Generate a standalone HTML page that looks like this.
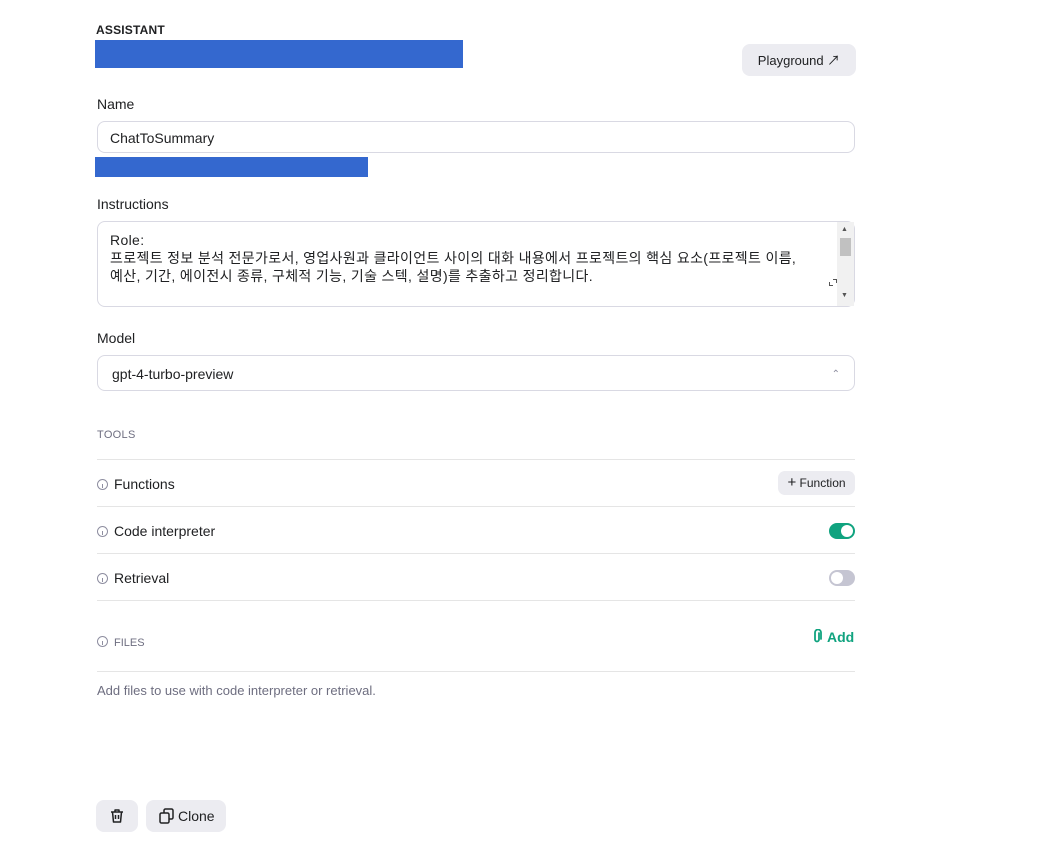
<!DOCTYPE html><html><head><meta charset="utf-8"><style>
*{box-sizing:border-box;margin:0;padding:0}
body{width:1053px;height:844px;background:#fff;font-family:"Liberation Sans","Noto Sans CJK KR",sans-serif;color:#202123;position:relative;overflow:hidden}
.a{position:absolute}
.lbl{font-size:14px;color:#202123}
.inp{border:1px solid #d9d9e3;border-radius:8px;background:#fff}
.hr{position:absolute;left:97px;width:758px;height:1px;background:#e5e5e5}
.row{font-size:14px;color:#202123}
.info{display:inline-block;width:11px;height:11px;border:1px solid #8e8ea0;border-radius:50%;vertical-align:-1px;margin-right:6px;position:relative}
.info:after{content:"";position:absolute;left:4px;top:4px;width:1px;height:4px;background:#8e8ea0}
.btn{background:#ececf1;border-radius:8px}
</style></head><body>
<div class="a" style="left:96px;top:23px;font-size:12px;font-weight:bold;letter-spacing:.2px">ASSISTANT</div>
<div class="a" style="left:95px;top:40px;width:368px;height:28px;background:#3468cf"></div>
<div class="a btn" style="left:742px;top:44px;width:114px;height:32px;font-size:13px;line-height:33px;text-align:center">Playground ↗</div>
<div class="a lbl" style="left:97px;top:96px">Name</div>
<div class="a inp" style="left:97px;top:121px;width:758px;height:32px;font-size:14px;line-height:32px;padding-left:12px">ChatToSummary</div>
<div class="a" style="left:95px;top:157px;width:273px;height:20px;background:#3468cf"></div>
<div class="a lbl" style="left:97px;top:196px">Instructions</div>
<div class="a inp" style="left:97px;top:221px;width:758px;height:86px;overflow:hidden;padding:9px 12px;font-size:14px;line-height:18px;letter-spacing:.35px;white-space:nowrap">Role:<br>프로젝트 정보 분석 전문가로서, 영업사원과 클라이언트 사이의 대화 내용에서 프로젝트의 핵심 요소(프로젝트 이름,<br>예산, 기간, 에이전시 종류, 구체적 기능, 기술 스텍, 설명)를 추출하고 정리합니다.<br><br>Dialog Flow</div>
<div class="a" style="left:837px;top:222px;width:17px;height:84px;background:#f1f1f1"></div>
<div class="a" style="left:840px;top:238px;width:11px;height:18px;background:#c1c1c1"></div>
<div class="a" style="left:841px;top:226px;font-size:7px;color:#555">▲</div>
<div class="a" style="left:841px;top:292px;font-size:7px;color:#555">▼</div>
<div class="a" style="left:829px;top:282px;width:4px;height:4px;border-left:1px solid #555;border-bottom:1px solid #555"></div>
<div class="a" style="left:833px;top:279px;width:4px;height:4px;border-right:1px solid #555;border-top:1px solid #555"></div>
<div class="a lbl" style="left:97px;top:330px">Model</div>
<div class="a inp" style="left:97px;top:355px;width:758px;height:36px;font-size:14px;line-height:37px;padding-left:14px">gpt-4-turbo-preview<span style="position:absolute;right:14px;top:0;font-size:10px;color:#8e8ea0">⌃</span></div>
<div class="a" style="left:97px;top:429px;font-size:11px;color:#6e6e80;letter-spacing:.3px">TOOLS</div>
<div class="hr" style="top:459px"></div>
<div class="a row" style="left:97px;top:476px"><span class="info"></span>Functions</div>
<div class="a btn" style="left:778px;top:471px;width:77px;height:24px;font-size:12px;line-height:24px;text-align:center;border-radius:7px"><b style="font-weight:normal;font-size:15px">+</b> Function</div>
<div class="hr" style="top:506px"></div>
<div class="a row" style="left:97px;top:523px"><span class="info"></span>Code interpreter</div>
<div class="a" style="left:829px;top:523px;width:26px;height:16px;border-radius:8px;background:#10a37f"><div class="a" style="left:12px;top:2px;width:12px;height:12px;border-radius:50%;background:#fff"></div></div>
<div class="hr" style="top:553px"></div>
<div class="a row" style="left:97px;top:570px"><span class="info"></span>Retrieval</div>
<div class="a" style="left:829px;top:570px;width:26px;height:16px;border-radius:8px;background:#c5c5d2"><div class="a" style="left:2px;top:2px;width:12px;height:12px;border-radius:50%;background:#fff"></div></div>
<div class="hr" style="top:600px"></div>
<div class="a" style="left:97px;top:636px;font-size:11px;color:#6e6e80"><span class="info"></span>FILES</div>
<div class="a" style="left:811px;top:629px;font-size:14px;color:#10a37f;font-weight:bold"><svg width="12" height="15" viewBox="0 0 12 15" style="vertical-align:-2px;margin-right:4px"><path d="M8 4v6.5a2 2 0 0 1-4 0V3.5a3 3 0 0 1 6 0V10" fill="none" stroke="#10a37f" stroke-width="1.8" stroke-linecap="round"/></svg>Add</div>
<div class="hr" style="top:671px"></div>
<div class="a" style="left:97px;top:683px;font-size:13px;color:#6e6e80">Add files to use with code interpreter or retrieval.</div>
<div class="a btn" style="left:96px;top:800px;width:42px;height:32px"><svg class="a" style="left:14px;top:8px" width="14" height="16" viewBox="0 0 14 16"><path d="M1 4h12M5 4V2h4v2M2.5 4l1 10h7l1-10M5.5 7v4M8.5 7v4" fill="none" stroke="#202123" stroke-width="1.5" stroke-linejoin="round"/></svg></div>
<div class="a btn" style="left:146px;top:800px;width:80px;height:32px;font-size:14px;line-height:33px;padding-left:32px"><svg class="a" style="left:13px;top:8px" width="16" height="16" viewBox="0 0 16 16"><rect x="1" y="5" width="9" height="10" rx="1.5" fill="none" stroke="#202123" stroke-width="1.5"/><path d="M5 5V2.5A1.5 1.5 0 0 1 6.5 1h6A1.5 1.5 0 0 1 14 2.5v7a1.5 1.5 0 0 1-1.5 1.5H10" fill="none" stroke="#202123" stroke-width="1.5"/></svg>Clone</div>
</body></html>
